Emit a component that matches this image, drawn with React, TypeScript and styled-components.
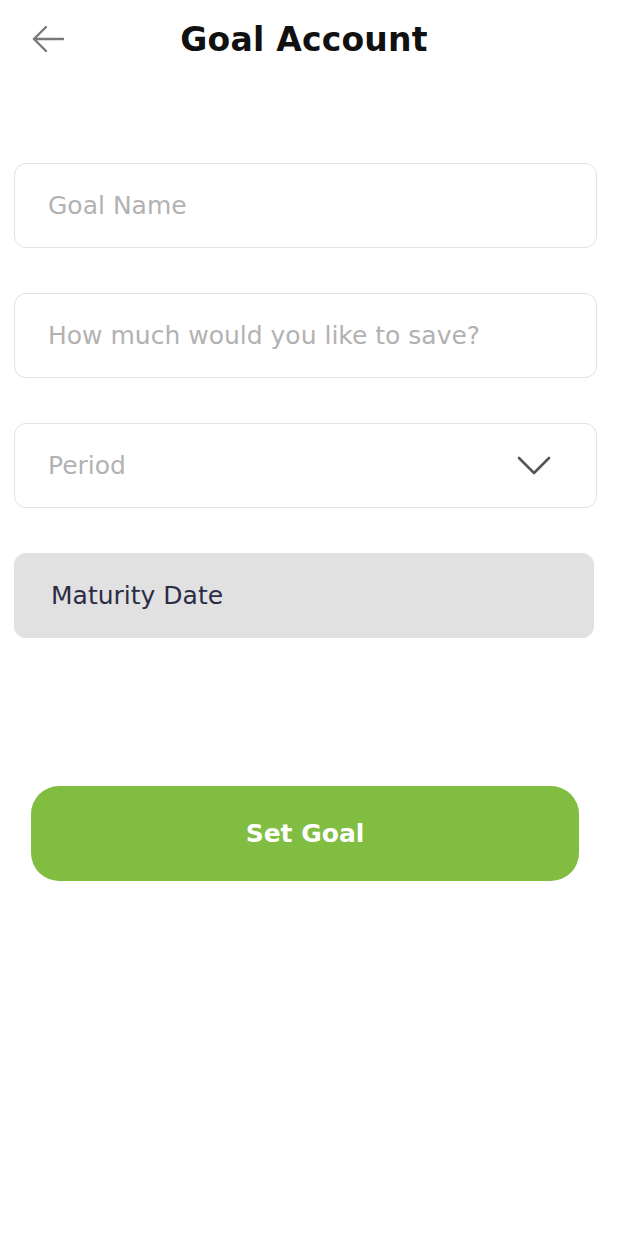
import React from "react";
import styled, { createGlobalStyle } from "styled-components";

const Global = createGlobalStyle`
  html, body { margin: 0; padding: 0; background: #fff; }
  body { font-family: "DejaVu Sans", "Open Sans", sans-serif; }
  * { box-sizing: border-box; }
`;

const Page = styled.div`
  width: 628px;
  min-height: 1256px;
  background: #fff;
  display: flex;
  flex-direction: column;
`;

const Header = styled.header`
  height: 78px;
  display: flex;
  align-items: center;
  padding: 0 0 0 30px;
  position: relative;
`;

const BackButton = styled.button`
  border: none;
  background: none;
  padding: 0;
  width: 36px;
  height: 36px;
  display: flex;
  align-items: center;
  justify-content: center;
  color: #777;
  cursor: pointer;
`;

const Title = styled.h1`
  margin: 0;
  position: absolute;
  left: 0;
  right: 20px;
  text-align: center;
  pointer-events: none;
  font-family: "DejaVu Sans", sans-serif;
  font-weight: 700;
  font-size: 33px;
  letter-spacing: 0.2px;
  color: #111;
`;

const Form = styled.div`
  display: flex;
  flex-direction: column;
  gap: 45px;
  padding: 85px 31px 0 14px;
`;

const Field = styled.div<{ $filled?: boolean }>`
  height: 85px;
  border-radius: 12px;
  border: ${(p) => (p.$filled ? "none" : "1.5px solid #e2e2e2")};
  background: ${(p) => (p.$filled ? "#e1e1e1" : "#fff")};
  margin-right: ${(p) => (p.$filled ? "3px" : "0")};
  display: flex;
  align-items: center;
  justify-content: space-between;
  padding: 0 45px 0 ${(p) => (p.$filled ? "37px" : "33px")};
`;

const Placeholder = styled.span<{ $dark?: boolean }>`
  font-family: "DejaVu Sans", sans-serif;
  font-size: 25px;
  color: ${(p) => (p.$dark ? "#2b2d45" : "#b2b2b2")};
`;

const ButtonWrap = styled.div`
  padding: 148px 49px 0 31px;
`;

const PrimaryButton = styled.button`
  width: 100%;
  height: 95px;
  border: none;
  border-radius: 28px;
  background: #80bd41;
  color: #fff;
  font-family: "DejaVu Sans", sans-serif;
  font-weight: 700;
  font-size: 25px;
  cursor: pointer;
`;

export default function App() {
  return (
    <Page>
      <Global />
      <Header>
        <BackButton aria-label="Back">
          <svg width="34" height="30" viewBox="0 0 34 30" fill="none" stroke="#7a7a7a" strokeWidth="2.4" strokeLinecap="round" strokeLinejoin="round">
            <path d="M32 15H3" />
            <path d="M15 3L3 15l12 12" />
          </svg>
        </BackButton>
        <Title>Goal Account</Title>
      </Header>
      <Form>
        <Field>
          <Placeholder>Goal Name</Placeholder>
        </Field>
        <Field>
          <Placeholder>How much would you like to save?</Placeholder>
        </Field>
        <Field>
          <Placeholder>Period</Placeholder>
          <svg width="34" height="20" viewBox="0 0 34 20" fill="none" stroke="#555" strokeWidth="2.6" strokeLinecap="round" strokeLinejoin="round">
            <path d="M2 2l15 15L32 2" />
          </svg>
        </Field>
        <Field $filled>
          <Placeholder $dark>Maturity Date</Placeholder>
        </Field>
      </Form>
      <ButtonWrap>
        <PrimaryButton>Set Goal</PrimaryButton>
      </ButtonWrap>
    </Page>
  );
}
